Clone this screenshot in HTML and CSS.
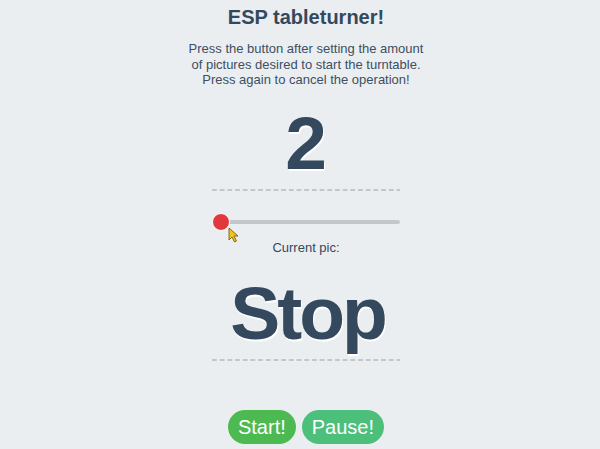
FILE: index.html
```html
<!DOCTYPE html>
<html lang="en">
<head>
<meta charset="utf-8">
<title>ESP tableturner</title>
<link rel="stylesheet" href="styles.css">
</head>
<body>
<main class="app">
  <h1 class="title">ESP tableturner!</h1>
  <p class="intro">Press the button after setting the amount<br>of pictures desired to start the turntable.<br>Press again to cancel the operation!</p>
  <div class="display">2</div>
  <div class="slider">
    <div class="track"></div>
    <div class="thumb"></div>
    <svg class="cursor" width="12" height="16" viewBox="0 0 12 16"><path d="M1 1 L1 13 L4 10 L6.5 15 L8.5 14 L6 9 L10 9 Z" fill="#f2c31a" stroke="#6b5200" stroke-width="0.8" stroke-linejoin="round"/></svg>
  </div>
  <p class="label">Current pic:</p>
  <div class="display status">Stop</div>
  <div class="buttons">
    <button class="btn btn-start">Start!</button>
    <button class="btn btn-pause">Pause!</button>
  </div>
</main>
</body>
</html>
```
FILE: styles.css
```css
html, body {
  margin: 0;
  padding: 0;
  background: #eaeef1;
}
body {
  font-family: "Liberation Sans", Arial, sans-serif;
  color: #34495e;
}
.app {
  display: flex;
  flex-direction: column;
  align-items: center;
  padding-left: 12px;
}
.title {
  margin: 5px 0 0;
  font-size: 20px;
  line-height: 24px;
  font-weight: bold;
}
.intro {
  margin: 12px 0 0;
  font-size: 13px;
  line-height: 15.5px;
  text-align: center;
  color: #3d4f61;
}
.display {
  width: 188px;
  margin-top: 18px;
  font-size: 75px;
  line-height: 74px;
  font-weight: bold;
  text-align: center;
  text-shadow: 1px 2px 0 #ffffff;
  background-image: linear-gradient(to right, #c3c7ca 5px, transparent 5px);
  background-size: 7.7px 2px;
  background-repeat: repeat-x;
  background-position: 0 bottom;
  padding-bottom: 11px;
}
.status {
  margin-top: 20px;
  letter-spacing: -3px;
  padding-left: 3px;
  box-sizing: border-box;
}
.slider {
  position: relative;
  width: 188px;
  height: 18px;
  margin-top: 22px;
}
.track {
  position: absolute;
  left: 4px;
  right: 0;
  top: 7px;
  height: 4px;
  border-radius: 2px;
  background: #c3c7ca;
}
.thumb {
  position: absolute;
  left: 0;
  top: 0;
  width: 16px;
  height: 16px;
  border-radius: 50%;
  background: #e0383d;
  border: 1px solid #ffffff;
}
.cursor {
  position: absolute;
  left: 16px;
  top: 14px;
}
.label {
  margin: 9px 0 0;
  font-size: 13px;
  line-height: 16px;
}
.buttons {
  display: flex;
  gap: 6px;
  margin-top: 49px;
}
.btn {
  border: none;
  color: #ffffff;
  font-family: "Liberation Sans", Arial, sans-serif;
  font-size: 20px;
  line-height: 24px;
  padding: 5px 10px;
  border-radius: 17px;
}
.btn-start {
  background: #4dba51;
}
.btn-pause {
  background: #4cc07b;
}
```
